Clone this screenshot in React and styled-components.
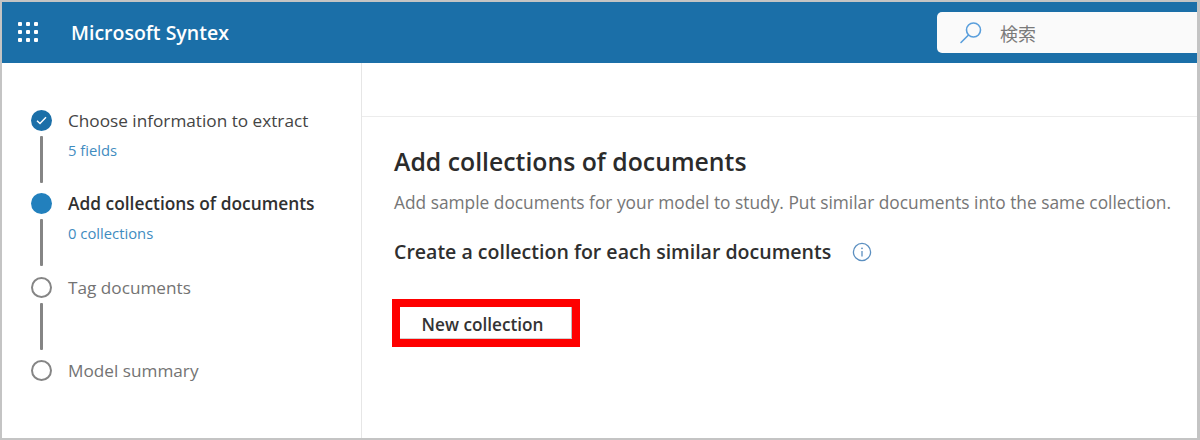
import styled, { createGlobalStyle } from "styled-components";

const GlobalStyle = createGlobalStyle`
  html, body {
    margin: 0;
    padding: 0;
    background: #fff;
  }
  body {
    font-family: "Open Sans", "Noto Sans", "Noto Sans CJK JP", sans-serif;
  }
`;

const Frame = styled.div`
  box-sizing: border-box;
  width: 1200px;
  height: 440px;
  display: flex;
  flex-direction: column;
  overflow: hidden;
  border: 2px solid #c4c4c4;
  border-right-width: 3px;
`;

const Header = styled.header`
  height: 61px;
  flex: none;
  display: flex;
  align-items: center;
  background: #1b6fa8;
  padding-left: 16px;
`;

const Waffle = styled.div`
  display: grid;
  grid-template-columns: repeat(3, 4px);
  grid-auto-rows: 4px;
  gap: 4px;
  margin: -1px 33px 0 0;
  span {
    background: #fff;
    border-radius: 1px;
  }
`;

const Brand = styled.div`
  color: #fff;
  font-size: 19.5px;
  font-weight: 600;
`;

const SearchBox = styled.div`
  box-sizing: border-box;
  width: 260px;
  height: 41px;
  margin-left: auto;
  display: flex;
  align-items: center;
  gap: 17px;
  padding-left: 22px;
  background: #fafafa;
  border-radius: 5px 0 0 5px;
  color: #7a7a7a;
  font-size: 18px;
  font-family: "Noto Sans CJK JP", sans-serif;
`;

const Body = styled.div`
  flex: 1;
  display: flex;
  min-height: 0;
`;

const Sidebar = styled.nav`
  box-sizing: border-box;
  width: 360px;
  flex: none;
  padding: 47px 0 0 28px;
  border-right: 1px solid #e6e6e6;
`;

const Step = styled.div`
  display: grid;
  grid-template-columns: 22px 1fr;
  column-gap: 16px;
  height: 83.4px;
`;

const Track = styled.div`
  display: flex;
  flex-direction: column;
  align-items: center;
`;

const Dot = styled.div`
  box-sizing: border-box;
  width: 21px;
  height: 21px;
  flex: none;
  border-radius: 50%;
  display: flex;
  align-items: center;
  justify-content: center;
  background: ${(p) => (p.$state === "todo" ? "#fff" : p.$state === "done" ? "#1b6fa8" : "#2280bd")};
  border: ${(p) => (p.$state === "todo" ? "2.5px solid #858585" : "none")};
`;

const Connector = styled.div`
  width: 3px;
  height: 47px;
  margin-top: 5px;
  background: #858585;
  border-radius: 1px;
`;

const StepText = styled.div`
  display: flex;
  flex-direction: column;
`;

const StepTitle = styled.div`
  font-size: ${(p) => (p.$active ? "17.35px" : "17.2px")};
  line-height: 21px;
  white-space: nowrap;
  font-weight: ${(p) => (p.$active ? 600 : 400)};
  color: ${(p) => (p.$muted ? "#737373" : p.$active ? "#303030" : "#444")};
`;

const StepNote = styled.div`
  margin-top: 10px;
  font-size: 14.8px;
  line-height: 18px;
  color: #3f8cc0;
`;

const Main = styled.main`
  flex: 1;
  min-width: 0;
  display: flex;
  flex-direction: column;
`;

const TopStrip = styled.div`
  height: 53px;
  flex: none;
  border-bottom: 1px solid #ececec;
`;

const Content = styled.section`
  padding: 27px 0 0 32px;
`;

const Title = styled.h1`
  margin: 0;
  font-size: 24.8px;
  line-height: 34px;
  font-weight: 600;
  color: #2b2b2b;
`;

const Description = styled.p`
  margin: 13px 0 0;
  font-size: 17.33px;
  line-height: 22px;
  white-space: nowrap;
  color: #767676;
`;

const SubRow = styled.div`
  margin-top: 26px;
  display: flex;
  align-items: center;
  gap: 21px;
`;

const SubTitle = styled.h2`
  margin: 0;
  font-size: 19.55px;
  line-height: 26px;
  font-weight: 600;
  color: #2f2f2f;
`;

const ButtonMark = styled.div`
  box-sizing: border-box;
  width: 188px;
  height: 48px;
  margin: 34px 0 0 -2px;
  border: 8px solid #fe0000;
`;

const NewButton = styled.button`
  box-sizing: border-box;
  width: 100%;
  height: 100%;
  padding: 3px 6px 0 0;
  background: #fff;
  border: none;
  border-right: 1px solid #bdbdbd;
  border-bottom: 1px solid #d0d0d0;
  font-family: inherit;
  font-size: 17.2px;
  font-weight: 600;
  color: #333;
`;

const steps = [
  { title: "Choose information to extract", note: "5 fields", state: "done" },
  { title: "Add collections of documents", note: "0 collections", state: "active" },
  { title: "Tag documents", state: "todo" },
  { title: "Model summary", state: "todo" },
];

export default function App() {
  return (
    <>
      <GlobalStyle />
      <Frame>
        <Header>
          <Waffle>
            {Array.from({ length: 9 }).map((_, i) => (
              <span key={i} />
            ))}
          </Waffle>
          <Brand>Microsoft Syntex</Brand>
          <SearchBox>
            <svg width="24" height="24" viewBox="0 0 24 24" fill="none" stroke="#5a9fdc" strokeWidth="1.6">
              <circle cx="14.5" cy="9" r="7" />
              <path d="M9.5 14L2 21.5" strokeLinecap="round" />
            </svg>
            検索
          </SearchBox>
        </Header>
        <Body>
          <Sidebar>
            {steps.map((s, i) => (
              <Step key={s.title}>
                <Track>
                  <Dot $state={s.state}>
                    {s.state === "done" && (
                      <svg width="11" height="9" viewBox="0 0 11 9" fill="none" stroke="#fff" strokeWidth="1.4">
                        <path d="M1 4.8L4 7.6L10 1.2" />
                      </svg>
                    )}
                  </Dot>
                  {i < steps.length - 1 && <Connector />}
                </Track>
                <StepText>
                  <StepTitle $active={s.state === "active"} $muted={s.state === "todo"}>
                    {s.title}
                  </StepTitle>
                  {s.note && <StepNote>{s.note}</StepNote>}
                </StepText>
              </Step>
            ))}
          </Sidebar>
          <Main>
            <TopStrip />
            <Content>
              <Title>Add collections of documents</Title>
              <Description>
                Add sample documents for your model to study. Put similar documents into the same collection.
              </Description>
              <SubRow>
                <SubTitle>Create a collection for each similar documents</SubTitle>
                <svg width="20" height="20" viewBox="0 0 20 20" fill="none">
                  <circle cx="10" cy="10" r="8.6" stroke="#5b8fc0" strokeWidth="1.3" />
                  <path d="M10 9v5.5" stroke="#5b8fc0" strokeWidth="1.3" />
                  <circle cx="10" cy="6.3" r="0.9" fill="#5b8fc0" />
                </svg>
              </SubRow>
              <ButtonMark>
                <NewButton>New collection</NewButton>
              </ButtonMark>
            </Content>
          </Main>
        </Body>
      </Frame>
    </>
  );
}
